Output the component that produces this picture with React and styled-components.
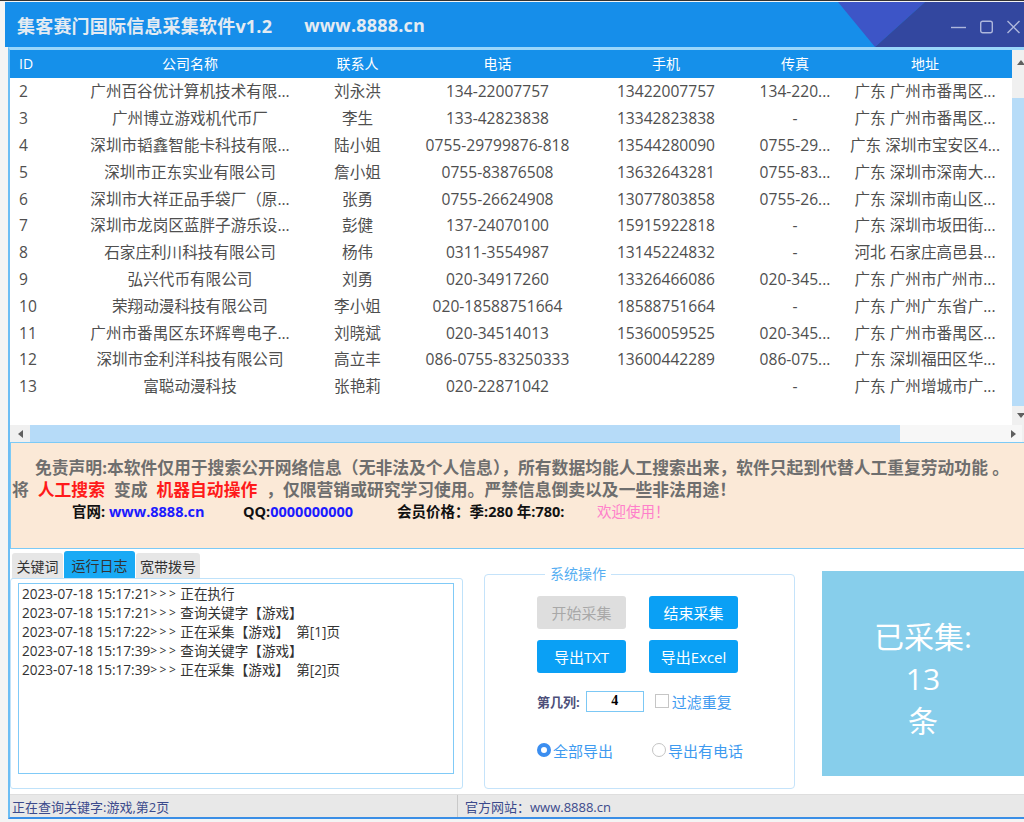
import React from "react";
import styled, { createGlobalStyle } from "styled-components";

const GlobalStyle = createGlobalStyle`
  html, body { margin: 0; padding: 0; }
  body {
    background: #f4f4f4;
    border-top: 1px solid #333;
    font-family: "Open Sans", "Noto Sans CJK SC", sans-serif;
    overflow: hidden;
    width: 1024px;
    height: 822px;
  }
`;

const COLS = "70px 220px 115px 165px 172px 86px 174px";

const rows = [
  ["2", "广州百谷优计算机技术有限...", "刘永洪", "134-22007757", "13422007757", "134-220...", "广东 广州市番禺区..."],
  ["3", "广州博立游戏机代币厂", "李生", "133-42823838", "13342823838", "-", "广东 广州市番禺区..."],
  ["4", "深圳市韬鑫智能卡科技有限...", "陆小姐", "0755-29799876-818", "13544280090", "0755-29...", "广东 深圳市宝安区4..."],
  ["5", "深圳市正东实业有限公司", "詹小姐", "0755-83876508", "13632643281", "0755-83...", "广东 深圳市深南大..."],
  ["6", "深圳市大祥正品手袋厂（原...", "张勇", "0755-26624908", "13077803858", "0755-26...", "广东 深圳市南山区..."],
  ["7", "深圳市龙岗区蓝胖子游乐设...", "彭健", "137-24070100", "15915922818", "-", "广东 深圳市坂田街..."],
  ["8", "石家庄利川科技有限公司", "杨伟", "0311-3554987", "13145224832", "-", "河北 石家庄高邑县..."],
  ["9", "弘兴代币有限公司", "刘勇", "020-34917260", "13326466086", "020-345...", "广东 广州市广州市..."],
  ["10", "荣翔动漫科技有限公司", "李小姐", "020-18588751664", "18588751664", "-", "广东 广州广东省广..."],
  ["11", "广州市番禺区东环辉粤电子...", "刘晓斌", "020-34514013", "15360059525", "020-345...", "广东 广州市番禺区..."],
  ["12", "深圳市金利洋科技有限公司", "高立丰", "086-0755-83250333", "13600442289", "086-075...", "广东 深圳福田区华..."],
  ["13", "富聪动漫科技", "张艳莉", "020-22871042", "", "-", "广东 广州增城市广..."],
];

const headers = ["ID", "公司名称", "联系人", "电话", "手机", "传真", "地址"];

const logs = [
  ["2023-07-18 15:17:21", "正在执行"],
  ["2023-07-18 15:17:21", "查询关键字【游戏】"],
  ["2023-07-18 15:17:22", "正在采集【游戏】  第[1]页"],
  ["2023-07-18 15:17:39", "查询关键字【游戏】"],
  ["2023-07-18 15:17:39", "正在采集【游戏】  第[2]页"],
];

const Window = styled.div`
  margin: 1px 0 0 5px;
  width: 1034px;
`;

const TitleBar = styled.div`
  position: relative;
  height: 45px;
  background: #168eea;
  display: flex;
  align-items: center;
  padding-left: 12px;
  overflow: hidden;
`;

const TitleDeco = styled.svg`
  position: absolute;
  top: 0;
  right: 0;
`;

const Title = styled.div`
  position: relative;
  z-index: 1;
  color: #e4ebf2;
  font-size: 18px;
  font-weight: bold;
  letter-spacing: 0.2px;
  margin-right: ${(p) => p.$gap || 0}px;
`;

const Controls = styled.div`
  position: relative;
  z-index: 1;
  margin-left: auto;
  margin-right: 19px;
  display: flex;
  align-items: center;
  gap: 14px;
  padding-top: 4px;
  svg { display: block; }
`;

const Body = styled.div`
  margin-left: 3px;
  border-left: 2px solid #6cbdf4;
  border-top: 3px solid #9ad6fb;
  border-bottom: 2px solid #3a8ee6;
  background: #fff;
`;

const GridArea = styled.div`
  display: flex;
`;

const TableBox = styled.div`
  width: 1002px;
`;

const RowBase = styled.div`
  display: grid;
  grid-template-columns: ${COLS};
  align-items: center;
`;

const HeadRow = styled(RowBase)`
  height: 28px;
  background: #1590ea;
  color: #fff;
  font-size: 14px;
`;

const Rows = styled.div`
  height: 347px;
  overflow: hidden;
`;

const DataRow = styled(RowBase)`
  height: 26.8px;
  color: #4f4f4f;
  font-size: 15.6px;
`;

const Cell = styled.div`
  text-align: ${(p) => (p.$left ? "left" : "center")};
  padding-left: ${(p) => (p.$left ? 9 : 0)}px;
  white-space: nowrap;
  overflow: hidden;
  line-height: 20px;
`;

const VScroll = styled.div`
  width: 17px;
  height: 375px;
  background: #f0f0f0;
  display: flex;
  flex-direction: column;
  align-items: center;
`;

const ArrowBox = styled.div`
  height: ${(p) => p.$h}px;
  width: ${(p) => (p.$w ? p.$w + "px" : "100%")};
  background: ${(p) => p.$bg || "transparent"};
  margin-top: ${(p) => (p.$end ? "auto" : "0")};
  display: flex;
  align-items: center;
  justify-content: center;
`;

const VThumb = styled.div`
  margin-top: 24px;
  width: 100%;
  height: 308px;
  background: #b7dcf8;
`;

const HScroll = styled.div`
  display: flex;
  height: 17px;
  background: #f7f7f7;
`;

const HThumb = styled.div`
  width: 870px;
  background: #b6dbf8;
`;

const HTrack = styled.div`
  flex: 1;
`;

const Corner = styled.div`
  width: 17px;
  background: #f0f0f0;
`;

const Notice = styled.div`
  border: 1px solid #7ccaf6;
  background: #fbe9d7;
  height: 107px;
  padding-top: 14px;
  box-sizing: border-box;
  font-size: 16.8px;
  font-weight: bold;
  line-height: 22px;
  color: #6e6e6e;
  white-space: nowrap;
`;

const Line = styled.div`
  padding-left: ${(p) => p.$pad || 1}px;
  display: flex;
  align-items: center;
`;

const Red = styled.span`
  color: #ff1a1a;
  margin: 0 9px;
`;

const InfoItem = styled.span`
  display: inline-block;
  width: ${(p) => p.$w}px;
  color: #111;
  font-size: 14.5px;
`;

const Blue = styled.span`
  color: #1a1aff;
`;

const Welcome = styled.span`
  color: #ff7fcb;
  font-weight: normal;
  font-size: 14.5px;
`;

const Lower = styled.div`
  display: flex;
  height: 245px;
`;

const TabCtl = styled.div`
  width: 453px;
  display: flex;
  flex-direction: column;
`;

const TabRow = styled.div`
  display: flex;
  align-items: flex-end;
  height: 30px;
  padding-left: 2px;
  gap: 1px;
`;

const Tab = styled.div`
  width: ${(p) => p.$w}px;
  height: ${(p) => (p.$active ? 28 : 26)}px;
  background: ${(p) => (p.$active ? "#19aaf5" : "#e6e6e6")};
  color: #333;
  font-size: 14px;
  border-radius: 3px 3px 0 0;
  display: flex;
  align-items: center;
  justify-content: center;
`;

const TabPanel = styled.div`
  height: 211px;
  margin-top: -1px;
  border: 1px solid #bfe2fa;
  border-radius: 3px;
  padding: 4px 0 0 7px;
  box-sizing: border-box;
`;

const LogBox = styled.div`
  width: 436px;
  height: 191px;
  border: 1px solid #80caf7;
  box-sizing: border-box;
  padding: 0 3px;
  font-size: 13.6px;
  color: #333;
  white-space: pre;
`;

const LogLine = styled.div`
  height: 19px;
  line-height: 19px;
  display: flex;
  align-items: center;
`;

const LogArrow = styled.span`
  letter-spacing: 2.5px;
  font-size: 12px;
  margin-right: 2px;
`;

const Group = styled.fieldset`
  margin: 16px 0 0 21px;
  width: 311px;
  height: 224px;
  box-sizing: border-box;
  border: 1px solid #c5e3fa;
  border-radius: 4px;
  padding: 13px 0 0 52px;
`;

const Legend = styled.legend`
  margin-left: 8px;
  padding: 0 5px;
  color: #56aef2;
  font-size: 14px;
  line-height: 18px;
`;

const BtnGrid = styled.div`
  display: grid;
  grid-template-columns: 89px 89px;
  column-gap: 23px;
  row-gap: 11px;
`;

const Btn = styled.div`
  height: 33px;
  border-radius: 3px;
  display: flex;
  align-items: center;
  justify-content: center;
  font-size: 15px;
  background: ${(p) => (p.$disabled ? "#dedede" : "#0aa0f5")};
  color: ${(p) => (p.$disabled ? "#a8a8a8" : "#fff")};
`;

const OptRow = styled.div`
  display: flex;
  align-items: center;
  height: 22px;
  margin-top: ${(p) => p.$mt}px;
`;

const ColLabel = styled.span`
  font-size: 13px;
  font-weight: bold;
  color: #4d4f7a;
  margin-right: 6px;
`;

const NumInput = styled.div`
  width: 58px;
  height: 21px;
  box-sizing: border-box;
  border: 1px solid #7cc8f5;
  font-family: "Liberation Serif", serif;
  font-size: 14px;
  font-weight: bold;
  display: flex;
  align-items: center;
  justify-content: center;
  margin-right: 11px;
`;

const Check = styled.span`
  width: 14px;
  height: 14px;
  box-sizing: border-box;
  border: 1px solid #c6c6c6;
  margin-right: 3px;
`;

const BlueText = styled.span`
  color: #3d9af0;
  font-size: 15px;
  width: ${(p) => (p.$w ? p.$w + "px" : "auto")};
`;

const Radio = styled.span`
  width: 14px;
  height: 14px;
  box-sizing: border-box;
  border-radius: 50%;
  border: ${(p) => (p.$on ? "4px solid #3b8ef0" : "1px solid #c4c4c4")};
  background: #fff;
  margin-right: 2px;
`;

const CountBox = styled.div`
  margin: 22px 0 0 27px;
  width: 215px;
  height: 205px;
  background: #87ceeb;
  color: #fff;
  font-size: 30px;
  line-height: 42px;
  display: flex;
  flex-direction: column;
  align-items: flex-start;
  justify-content: center;
  padding-left: 50px;
  box-sizing: border-box;
  text-align: center;
`;

const CountInner = styled.div`
  width: 102px;
  padding-top: 10px;
`;

const StatusBar = styled.div`
  height: 22px;
  background: #e8e8e8;
  border-top: 1px solid #dedede;
  display: flex;
  align-items: center;
  font-size: 13px;
  color: #3b4a8c;
`;

const StatusCell = styled.div`
  width: ${(p) => (p.$w ? p.$w + "px" : "auto")};
  padding-left: 2px;
  height: 100%;
  display: flex;
  align-items: center;
  border-right: ${(p) => (p.$sep ? "1px solid #c9c9c9" : "none")};
  margin-right: 5px;
`;

const Tri = ({ dir }) => {
  const pts = {
    up: "0,5 4,0 8,5",
    down: "0,0 8,0 4,5",
    left: "5,0 5,8 0,4",
    right: "0,0 0,8 5,4",
  }[dir];
  const w = dir === "up" || dir === "down" ? 8 : 5;
  const h = dir === "up" || dir === "down" ? 5 : 8;
  return (
    <svg width={w} height={h} viewBox={`0 0 ${w} ${h}`}>
      <polygon points={pts} fill="#606060" />
    </svg>
  );
};

export default function App() {
  return (
    <>
      <GlobalStyle />
      <Window>
        <TitleBar>
          <TitleDeco width="201" height="45" viewBox="0 0 201 45">
            <polygon points="0,0 87,0 37,45" fill="#3d55c7" />
            <polygon points="87,0 201,0 201,45 37,45" fill="#33479f" />
          </TitleDeco>
          <Title $gap={32}>集客赛门国际信息采集软件v1.2</Title>
          <Title>www.8888.cn</Title>
          <Controls>
            <svg width="15" height="14" viewBox="0 0 15 14">
              <line x1="0" y1="7.5" x2="15" y2="7.5" stroke="#aeb7dc" strokeWidth="1.4" />
            </svg>
            <svg width="13" height="14" viewBox="0 0 13 14">
              <rect x="0.7" y="1.2" width="11.6" height="11.6" rx="2" fill="none" stroke="#aeb7dc" strokeWidth="1.4" />
            </svg>
            <svg width="13" height="14" viewBox="0 0 13 14">
              <path d="M0.5 1 L12.5 13 M12.5 1 L0.5 13" stroke="#aeb7dc" strokeWidth="1.4" />
            </svg>
          </Controls>
        </TitleBar>
        <Body>
          <GridArea>
            <TableBox>
              <HeadRow>
                {headers.map((h, i) => (
                  <Cell key={h} $left={i === 0}>{h}</Cell>
                ))}
              </HeadRow>
              <Rows>
                {rows.map((r) => (
                  <DataRow key={r[0]}>
                    {r.map((c, i) => (
                      <Cell key={i} $left={i === 0}>{c}</Cell>
                    ))}
                  </DataRow>
                ))}
              </Rows>
            </TableBox>
            <VScroll>
              <ArrowBox $h={24}><Tri dir="up" /></ArrowBox>
              <VThumb />
              <ArrowBox $h={19} $end><Tri dir="down" /></ArrowBox>
            </VScroll>
          </GridArea>
          <HScroll>
            <ArrowBox $h={17} $w={20} $bg="#f0f0f0"><Tri dir="left" /></ArrowBox>
            <HThumb />
            <HTrack />
            <ArrowBox $h={17} $w={17}><Tri dir="right" /></ArrowBox>
            <Corner />
          </HScroll>
          <Notice>
            <Line $pad={24}>免责声明:本软件仅用于搜索公开网络信息（无非法及个人信息），所有数据均能人工搜索出来，软件只起到代替人工重复劳动功能 。</Line>
            <Line>将<Red>人工搜索</Red>变成<Red>机器自动操作</Red>，仅限营销或研究学习使用。严禁信息倒卖以及一些非法用途！</Line>
            <Line $pad={61}>
              <InfoItem $w={171}>官网: <Blue>www.8888.cn</Blue></InfoItem>
              <InfoItem $w={154}>QQ:<Blue>0000000000</Blue></InfoItem>
              <InfoItem $w={200}>会员价格：季:280 年:780:</InfoItem>
              <Welcome>欢迎使用！</Welcome>
            </Line>
          </Notice>
          <Lower>
            <TabCtl>
              <TabRow>
                <Tab $w={51}>关键词</Tab>
                <Tab $w={71} $active>运行日志</Tab>
                <Tab $w={64}>宽带拨号</Tab>
              </TabRow>
              <TabPanel>
                <LogBox>
                  {logs.map(([t, m], i) => (
                    <LogLine key={i}>
                      {t}
                      <LogArrow>&gt;&gt;&gt;</LogArrow>
                      {m}
                    </LogLine>
                  ))}
                </LogBox>
              </TabPanel>
            </TabCtl>
            <Group>
              <Legend>系统操作</Legend>
              <BtnGrid>
                <Btn $disabled>开始采集</Btn>
                <Btn>结束采集</Btn>
                <Btn>导出TXT</Btn>
                <Btn>导出Excel</Btn>
              </BtnGrid>
              <OptRow $mt={17}>
                <ColLabel>第几列:</ColLabel>
                <NumInput>4</NumInput>
                <Check />
                <BlueText>过滤重复</BlueText>
              </OptRow>
              <OptRow $mt={27}>
                <Radio $on />
                <BlueText $w={99}>全部导出</BlueText>
                <Radio />
                <BlueText>导出有电话</BlueText>
              </OptRow>
            </Group>
            <CountBox>
              <CountInner>
                <div>已采集:</div>
                <div>13</div>
                <div>条</div>
              </CountInner>
            </CountBox>
          </Lower>
          <StatusBar>
            <StatusCell $w={445} $sep>正在查询关键字:游戏,第2页</StatusCell>
            <StatusCell>官方网站：www.8888.cn</StatusCell>
          </StatusBar>
        </Body>
      </Window>
    </>
  );
}
